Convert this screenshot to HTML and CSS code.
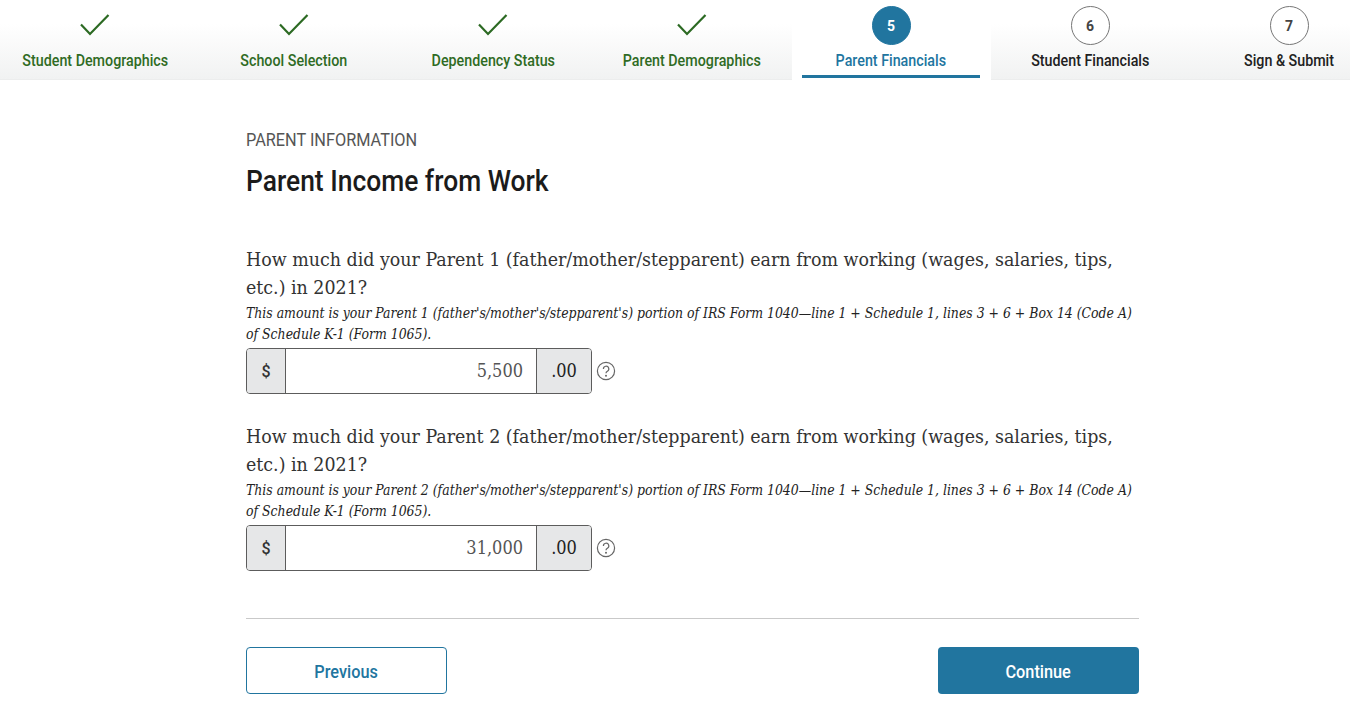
FILE: index.html
```html
<!DOCTYPE html>
<html lang="en">
<head>
<meta charset="utf-8">
<title>Parent Income from Work</title>
<link rel="stylesheet" href="styles.css">
</head>
<body>
<nav class="steps">
  <div class="step done"><svg class="check" viewBox="0 0 32 24"><path d="M2 11.5 L11 21 L29.5 2"/></svg><span class="label">Student Demographics</span></div>
  <div class="step done"><svg class="check" viewBox="0 0 32 24"><path d="M2 11.5 L11 21 L29.5 2"/></svg><span class="label">School Selection</span></div>
  <div class="step done"><svg class="check" viewBox="0 0 32 24"><path d="M2 11.5 L11 21 L29.5 2"/></svg><span class="label">Dependency Status</span></div>
  <div class="step done"><svg class="check" viewBox="0 0 32 24"><path d="M2 11.5 L11 21 L29.5 2"/></svg><span class="label">Parent Demographics</span></div>
  <div class="step active"><span class="num">5</span><span class="label">Parent Financials</span></div>
  <div class="step"><span class="num">6</span><span class="label">Student Financials</span></div>
  <div class="step"><span class="num">7</span><span class="label">Sign &amp; Submit</span></div>
</nav>
<main class="content">
  <p class="eyebrow">PARENT INFORMATION</p>
  <h1 class="title">Parent Income from Work</h1>
  <section class="question first">
    <p class="prompt">How much did your Parent 1 (father/mother/stepparent) earn from working (wages, salaries, tips, etc.) in 2021?</p>
    <p class="hint">This amount is your Parent 1 (father's/mother's/stepparent's) portion of IRS Form 1040—line 1 + Schedule 1, lines 3 + 6 + Box 14 (Code A) of Schedule K-1 (Form 1065).</p>
    <div class="field-row">
      <div class="money"><span class="pre">$</span><span class="value">5,500</span><span class="post">.00</span></div>
      <svg class="help" viewBox="0 0 20 20"><circle cx="10" cy="10" r="8.6"/><path d="M7.4 8a2.7 2.7 0 1 1 4 2.3c-.9.5-1.4 1-1.4 2"/><circle class="dot" cx="10" cy="14.8" r="1"/></svg>
    </div>
  </section>
  <section class="question">
    <p class="prompt">How much did your Parent 2 (father/mother/stepparent) earn from working (wages, salaries, tips, etc.) in 2021?</p>
    <p class="hint">This amount is your Parent 2 (father's/mother's/stepparent's) portion of IRS Form 1040—line 1 + Schedule 1, lines 3 + 6 + Box 14 (Code A) of Schedule K-1 (Form 1065).</p>
    <div class="field-row">
      <div class="money"><span class="pre">$</span><span class="value">31,000</span><span class="post">.00</span></div>
      <svg class="help" viewBox="0 0 20 20"><circle cx="10" cy="10" r="8.6"/><path d="M7.4 8a2.7 2.7 0 1 1 4 2.3c-.9.5-1.4 1-1.4 2"/><circle class="dot" cx="10" cy="14.8" r="1"/></svg>
    </div>
  </section>
  <hr class="rule">
  <div class="actions">
    <button class="btn prev"><span class="btn-text">Previous</span></button>
    <button class="btn next"><span class="btn-text">Continue</span></button>
  </div>
</main>
</body>
</html>
```
FILE: styles.css
```css
* { box-sizing: border-box; }
html, body { margin: 0; padding: 0; background: #fff; overflow: hidden; height: 709px; }
body { font-family: "DejaVu Serif Condensed", "DejaVu Serif", serif; color: #212121; }
.steps { display: flex; width: 1393px; margin-left: -4.5px; height: 80px; }
.step { width: 199px; flex: none; height: 80px; display: flex; flex-direction: column; align-items: center; position: relative; background: linear-gradient(#fff 30%, #f1f2f2 100%); border-bottom: 1px solid #eceded; }
.step.active { background: #fff; border-bottom: none; margin: 0 1px; width: 197px; }
.step.active::after { content: ""; position: absolute; left: 9.5px; right: 9.5px; bottom: 2px; height: 3px; background: #21759f; }
.check { width: 32px; height: 24px; margin-top: 13px; margin-bottom: 14px; fill: none; stroke: #2c6a23; stroke-width: 2.2; }
.num { width: 39px; height: 39px; margin-top: 6px; margin-bottom: 6px; border-radius: 50%; border: 1.5px solid #767676; display: flex; align-items: center; justify-content: center; font: 700 14px Roboto, sans-serif; color: #444; background: #fff; }
.active .num { background: #21759f; border-color: #21759f; color: #fff; }
.label { display: inline-block; font: 500 16.5px/20px Roboto, sans-serif; transform: scaleX(0.865); color: #212121; white-space: nowrap; }
.done .label { color: #2f6b24; }
.active .label { color: #21759f; }
.content { width: 893px; margin-left: 246px; }
.eyebrow { margin: 49px 0 0; font: 400 18px/22px Roboto, sans-serif; transform: scaleX(0.905); transform-origin: left; color: #555; }
.title { margin: 12px 0 0; font: 500 30px/36px Roboto, sans-serif; transform: scaleX(0.88); transform-origin: left; color: #1b1b1b; white-space: nowrap; }
.question { margin-top: 29px; }
.question.first { margin-top: 47px; }
.prompt { margin: 0; font-size: 19.4px; line-height: 28px; color: #333; }
.hint { margin: 1px 0 0; font-size: 13.87px; line-height: 21px; font-style: italic; color: #222; }
.field-row { display: flex; align-items: center; gap: 4px; margin-top: 3px; }
.money { width: 346px; height: 46px; display: flex; border: 1px solid #5c5c5c; border-radius: 4px; overflow: hidden; font-size: 18px; }
.pre { width: 39px; background: #e6e7e8; border-right: 1px solid #5c5c5c; display: flex; align-items: center; justify-content: center; font: 500 16px Roboto, sans-serif; color: #333; }
.value { flex: 1; text-align: right; padding-right: 13px; line-height: 44px; color: #555; }
.post { width: 55px; background: #e6e7e8; border-left: 1px solid #5c5c5c; text-align: center; line-height: 44px; color: #222; }
.help { width: 20px; height: 20px; fill: none; stroke: #666; stroke-width: 1.2; }
.help .dot { fill: #666; stroke: none; }
.rule { margin: 47px 0 0; border: 0; border-top: 1.5px solid #c9c9c9; }
.actions { display: flex; justify-content: space-between; margin-top: 28px; }
.btn { width: 201px; height: 47px; padding: 2px 0 0; border-radius: 4px; font: 500 18.5px Roboto, sans-serif; }
.btn-text { display: inline-block; transform: scaleX(0.88); }
.prev { background: #fff; color: #21759f; border: 1.5px solid #21759f; }
.next { background: #21759f; color: #fff; border: 0; }
```
